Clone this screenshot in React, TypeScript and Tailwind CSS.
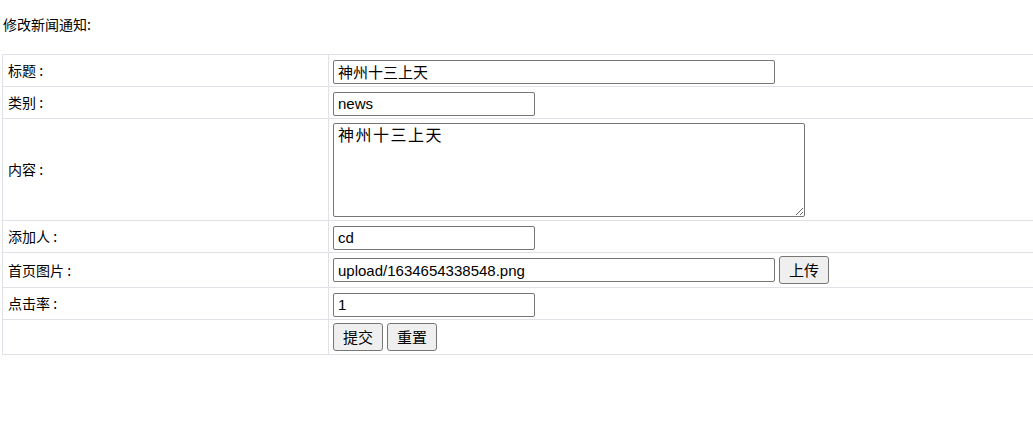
const inputCls =
  "h-[24px] border border-[#767676] rounded-[2px] px-[4px] text-[15px] text-black bg-white outline-none font-['Liberation_Sans','Noto_Sans_CJK_SC',sans-serif] align-middle"
const btnCls =
  "h-[28px] px-[8px] border border-[#767676] rounded-[3px] bg-[#efefef] text-[15px] text-black font-['Noto_Sans_CJK_SC',sans-serif] align-middle"
const tdL = "border border-[#e0e0e6] pl-[5px] text-[14px] text-black align-middle"
const tdR = "border border-[#e0e0e6] pl-[4px] align-middle"

export default function App() {
  return (
    <div className="w-[1033px] h-[429px] overflow-hidden bg-white font-['Noto_Sans_CJK_SC',sans-serif]">
      <div className="h-[54px] pl-[3px] pt-[14px] text-[14px] leading-[20px] font-normal text-black">修改新闻通知:</div>
      <table className="ml-[2px] w-[1040px] border-collapse">
        <tbody>
          <tr className="h-[32px]">
            <td className={`${tdL} w-[326px]`}>标题 :</td>
            <td className={tdR}>
              <input className={`${inputCls} w-[442px]`} defaultValue="神州十三上天" />
            </td>
          </tr>
          <tr className="h-[32px]">
            <td className={tdL}>类别 :</td>
            <td className={tdR}>
              <input className={`${inputCls} w-[202px]`} defaultValue="news" />
            </td>
          </tr>
          <tr className="h-[102px]">
            <td className={tdL}>内容 :</td>
            <td className={tdR}>
              <textarea
                className="block w-[472px] h-[94px] border border-[#767676] rounded-[2px] px-[4px] py-0 text-[16px] leading-[20px] tracking-[1.5px] text-black outline-none font-['Noto_Sans_CJK_SC',sans-serif]"
                defaultValue="神州十三上天"
              />
            </td>
          </tr>
          <tr className="h-[32px]">
            <td className={tdL}>添加人 :</td>
            <td className={tdR}>
              <input className={`${inputCls} w-[202px]`} defaultValue="cd" />
            </td>
          </tr>
          <tr className="h-[35px]">
            <td className={tdL}>首页图片 :</td>
            <td className={tdR}>
              <div className="flex items-center gap-[4px]">
                <input className={`${inputCls} w-[442px]`} defaultValue="upload/1634654338548.png" />
                <button className={`${btnCls} w-[50px]`}>上传</button>
              </div>
            </td>
          </tr>
          <tr className="h-[32px]">
            <td className={tdL}>点击率 :</td>
            <td className={tdR}>
              <input className={`${inputCls} w-[202px]`} defaultValue="1" />
            </td>
          </tr>
          <tr className="h-[35px]">
            <td className={tdL}></td>
            <td className={tdR}>
              <div className="flex items-center gap-[4px]">
                <button className={`${btnCls} w-[50px]`}>提交</button>
                <button className={`${btnCls} w-[50px]`}>重置</button>
              </div>
            </td>
          </tr>
        </tbody>
      </table>
    </div>
  )
}
